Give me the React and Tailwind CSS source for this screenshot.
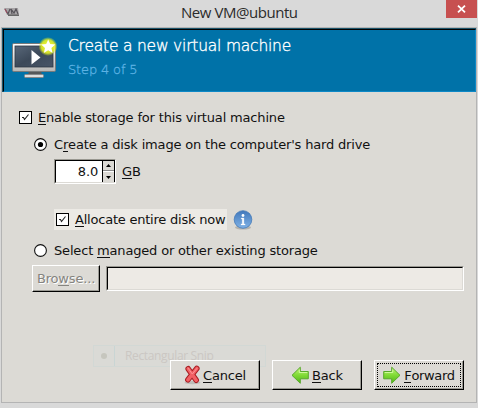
import React from "react";

const U = ({ children }) => (
  <span className="relative inline-block after:absolute after:inset-x-0 after:bottom-[1px] after:h-px after:bg-current after:content-['']">{children}</span>
);

function Check() {
  return (
    <span className="grid size-[13px] shrink-0 place-items-center border border-black bg-white">
      <svg width="11" height="11" viewBox="0 0 11 11">
        <path d="M2 5.500h1.500L4.500 7.500 8.500 2.500" fill="none" stroke="#222" strokeWidth="1.1" />
      </svg>
    </span>
  );
}

function Radio({ on }) {
  return (
    <svg className="size-[13px] shrink-0" viewBox="0 0 13 13">
      <circle cx="6.5" cy="6.5" r="5.9" fill="#fff" stroke="#111" strokeWidth="1.1" />
      {on && <circle cx="6.5" cy="6.5" r="2.6" fill="#000" />}
    </svg>
  );
}

function Button({ children, focused }) {
  return (
    <button className="relative flex h-[30px] w-[90px] items-center justify-center border border-t-white border-l-white border-r-black border-b-black bg-[#dcdad5] shadow-[inset_-1px_-1px_0_#9b9a94]">
      {focused && <span className="absolute inset-[2px] border border-dotted border-black" />}
      {children}
    </button>
  );
}

function Monitor() {
  return (
    <svg className="block" width="46" height="44" viewBox="0 0 46 44">
      <defs>
        <linearGradient id="frame" x1="0" y1="0" x2="0" y2="1">
          <stop offset="0" stopColor="#fff" />
          <stop offset="1" stopColor="#b7b7b5" />
        </linearGradient>
        <linearGradient id="screen" x1="0" y1="0" x2="1" y2="1">
          <stop offset="0" stopColor="#586779" />
          <stop offset="0.5" stopColor="#3c4959" />
          <stop offset="1" stopColor="#485567" />
        </linearGradient>
        <radialGradient id="glow">
          <stop offset="0" stopColor="#f4ff3c" />
          <stop offset="0.7" stopColor="#e4ee24" stopOpacity="0.9" />
          <stop offset="1" stopColor="#d4ea20" stopOpacity="0" />
        </radialGradient>
      </defs>
      <path d="M17 34h12l1 4H16z" fill="#55585a" />
      <rect x="12.5" y="37.5" width="19" height="3" rx="1" fill="#ddd" stroke="#85888a" />
      <rect x="0.5" y="6.5" width="43" height="28" rx="1.3" fill="url(#frame)" stroke="#777a7b" />
      <rect x="3" y="9" width="38" height="21" fill="url(#screen)" stroke="#2d3745" strokeWidth=".8" />
      <path d="M19.5 13 28.5 20.5 19.5 27.5z" fill="#fff" />
      <circle cx="36" cy="9.5" r="9.5" fill="url(#glow)" />
      <path d="m36.200 2.500 2 4.600 5 .5-3.800 3.300 1.200 5-4.400-2.600-4.400 2.600 1.200-5L29.200 7.600l5-.5z" fill="#fff" />
    </svg>
  );
}

function Arrow({ right }) {
  const id = right ? "ag" : "bg";
  return (
    <svg className={right ? "shrink-0" : "shrink-0 -scale-x-100"} width="18" height="18" viewBox="0 0 18 18">
      <defs>
        <linearGradient id={id} x1="0" y1="0" x2="0" y2="1">
          <stop offset="0" stopColor="#c2f57c" />
          <stop offset="0.5" stopColor="#80da35" />
          <stop offset="1" stopColor="#52b51b" />
        </linearGradient>
      </defs>
      <path d="M.7 5.500h8V1.200L17 9.300l-8.300 8v-4.500h-8z" fill={`url(#${id})`} stroke="#58a82b" strokeWidth="1" strokeLinejoin="round" />
      <path d="M1.700 6.500h8V3.600" fill="none" stroke="#dbffad" strokeWidth=".8" />
    </svg>
  );
}

function Cross() {
  return (
    <svg className="shrink-0" width="17" height="20" viewBox="0 0 17 20">
      <ellipse cx="8.500" cy="17.600" rx="8" ry="1.700" fill="#888" opacity=".35" />
      <path d="M4.200 3.800 12.200 15.200M12.800 3.500 3.900 14.800" fill="none" stroke="#a81d22" strokeWidth="5.600" strokeLinecap="round" />
      <path d="M4.200 3.800 12.200 15.200M12.800 3.500 3.900 14.800" fill="none" stroke="#f26064" strokeWidth="3.600" strokeLinecap="round" />
      <path d="M4 3 8.300 9 12.800 3.500" fill="none" stroke="#ff9295" strokeWidth="1" strokeLinecap="round" />
    </svg>
  );
}

export default function App() {
  return (
    <div className="relative h-[408px] w-[478px] overflow-hidden bg-[#d9d9d9] font-['DejaVu_Sans',sans-serif] text-[13px] leading-[17px] tracking-[-0.17px] whitespace-nowrap text-[#111]">
      <div className="flex h-[27px] items-start">
        <svg className="mt-[8px] ml-[4px]" width="16" height="8" viewBox="0 0 16 8">
          <path d="M0 0h14l1 7H3z" fill="#a7a4a6" />
          <path d="m1 1 3 5 2-5M8 6l-1-5 3 4 2-4 2 5" fill="none" stroke="#57545a" strokeWidth="1.200" />
          <path d="m1 1 2 4" stroke="#a54b60" />
          <path d="M4 7.200h11" stroke="#333" />
        </svg>
        <span className="mt-[2px] ml-[161px] w-[120px] font-['Open_Sans',sans-serif] text-[15px] leading-[21px] tracking-[-0.45px] text-[#2b2b2b]">New VM@ubuntu</span>
        <span className="ml-auto mr-[1px] grid h-[18px] w-[31px] place-items-center bg-[#c75050]">
          <svg width="9" height="8" viewBox="0 0 9 8"><path d="m1 .7 7 6.600m0-6.600-7 6.600" stroke="#fff" strokeWidth="1.800" /></svg>
        </span>
      </div>

      <div className="ml-[1px] h-[376px] w-[476px] border border-[#b4b4b4] bg-[#dcdad5]">
        <div className="h-[64px] border-t border-l border-[#1a5268]">
          <div className="flex h-[63px] border border-t-black border-l-black border-r-[#0d88c6] border-b-[#0d88c6] bg-[#0072a8]">
            <div className="mt-[7px] ml-[8px] w-[56px]"><Monitor /></div>
            <div>
              <div className="mt-[6px] text-[15.500px] leading-[20px] font-extralight tracking-[-0.21px] text-white [-webkit-text-stroke:0.35px_white]">Create a new virtual machine</div>
              <div className="mt-[6px] text-[13px] leading-[16px] font-extralight tracking-[-0.15px] text-[#5cb2e4] [-webkit-text-stroke:0.3px_#5cb2e4]">Step 4 of 5</div>
            </div>
          </div>
        </div>

        <div className="mt-[17px] ml-[17px] flex h-[17px] items-center">
          <Check /><span className="ml-[6px]"><U>E</U>nable storage for this virtual machine</span>
        </div>
        <div className="mt-[10px] ml-[32px] flex h-[17px] items-center">
          <Radio on /><span className="ml-[7px]">C<U>r</U>eate a disk image on the computer's hard drive</span>
        </div>
        <div className="mt-[6px] ml-[52px] flex h-[25px] items-center">
          <div className="flex h-[25px] w-[62px] border border-t-[#989790] border-l-[#989790] border-r-white border-b-white">
            <div className="flex w-full border-t border-l border-b border-t-black border-l-black border-b-[#dcdad5] bg-white">
              <span className="flex-1 pt-[2px] pr-[4px] text-right">8.0</span>
              <span className="flex w-[13px] flex-col border-r border-l border-black bg-[#dcdad5]">
                <span className="grid h-[10px] place-items-center border-b border-[#888]"><svg width="5" height="3"><path d="M0 3 2.500 0 5 3z" /></svg></span>
                <span className="grid h-[11px] place-items-center border-t border-white"><svg width="5" height="3"><path d="M0 0h5L2.500 3z" /></svg></span>
              </span>
            </div>
          </div>
          <span className="ml-[6px]"><U>G</U>B</span>
        </div>
        <div className="mt-[25px] ml-[52px] flex h-[21px] items-center">
          <div className="flex h-[21px] w-[173px] items-center bg-[#eceae5] pl-[2px]">
            <Check /><span className="ml-[6px] tracking-[-0.22px]"><U>A</U>llocate entire disk now</span>
          </div>
          <svg className="ml-[6px]" width="20" height="20" viewBox="0 0 20 20">
            <defs><linearGradient id="info" x1="0" y1="0" x2="0" y2="1"><stop offset="0" stopColor="#4178bb" /><stop offset="1" stopColor="#80b2e6" /></linearGradient></defs>
            <ellipse cx="10" cy="17.500" rx="8" ry="2" fill="#8d8d89" opacity=".5" />
            <circle cx="10" cy="9.500" r="8.800" fill="url(#info)" stroke="#4379b8" strokeWidth=".8" />
            <path d="M8.300 8h2.600v6h1.200v.9H8v-.9h1.200V9h-1z" fill="#fff" stroke="#fff" strokeWidth=".3" /><circle cx="10" cy="5.500" r="1.400" fill="#fff" />
          </svg>
        </div>
        <div className="mt-[12px] ml-[32px] flex h-[17px] items-center">
          <Radio /><span className="ml-[7px]">Select <U>m</U>anaged or other existing storage</span>
        </div>
        <div className="mt-[6px] ml-[30px] flex h-[27px] items-center">
          <button className="flex h-[27px] w-[68px] items-center justify-center border border-t-white border-l-white border-r-black border-b-black bg-[#dcdad5] text-[#85847f] shadow-[inset_-1px_-1px_0_#9b9a94] [text-shadow:1px_1px_0_#fff]"><span>Bro<U>w</U>se...</span></button>
          <div className="ml-[6px] h-[25px] w-[358px] border border-t-[#989790] border-l-[#989790] border-r-white border-b-white">
            <div className="h-full border border-t-black border-l-black border-r-[#dcdad5] border-b-[#dcdad5] bg-[#edeae5]" />
          </div>
        </div>
      </div>

      <div className="absolute top-[345px] left-[93px] flex h-[22px] w-[173px] border border-[#d2d8d5] bg-[#dadad6] font-['Open_Sans',sans-serif] text-[12px] leading-[20px] tracking-[-0.35px] text-[#cbc7c3]">
        <span className="grid w-[21px] place-items-center border-r border-[#c9d5d4]"><span className="size-[6px] rounded-full bg-[#c6c6be]" /></span>
        <span className="ml-[10px]">Rectangular Snip</span>
      </div>
      <div className="absolute top-[360px] left-[170px] flex gap-[12px]">
        <Button><Cross /><span className="ml-[2px]"><U>C</U>ancel</span></Button>
        <Button><Arrow /><span className="ml-[3px]"><U>B</U>ack</span></Button>
        <Button focused><Arrow right /><span className="ml-[3px] tracking-[-0.35px]"><U>F</U>orward</span></Button>
      </div>
    </div>
  );
}
